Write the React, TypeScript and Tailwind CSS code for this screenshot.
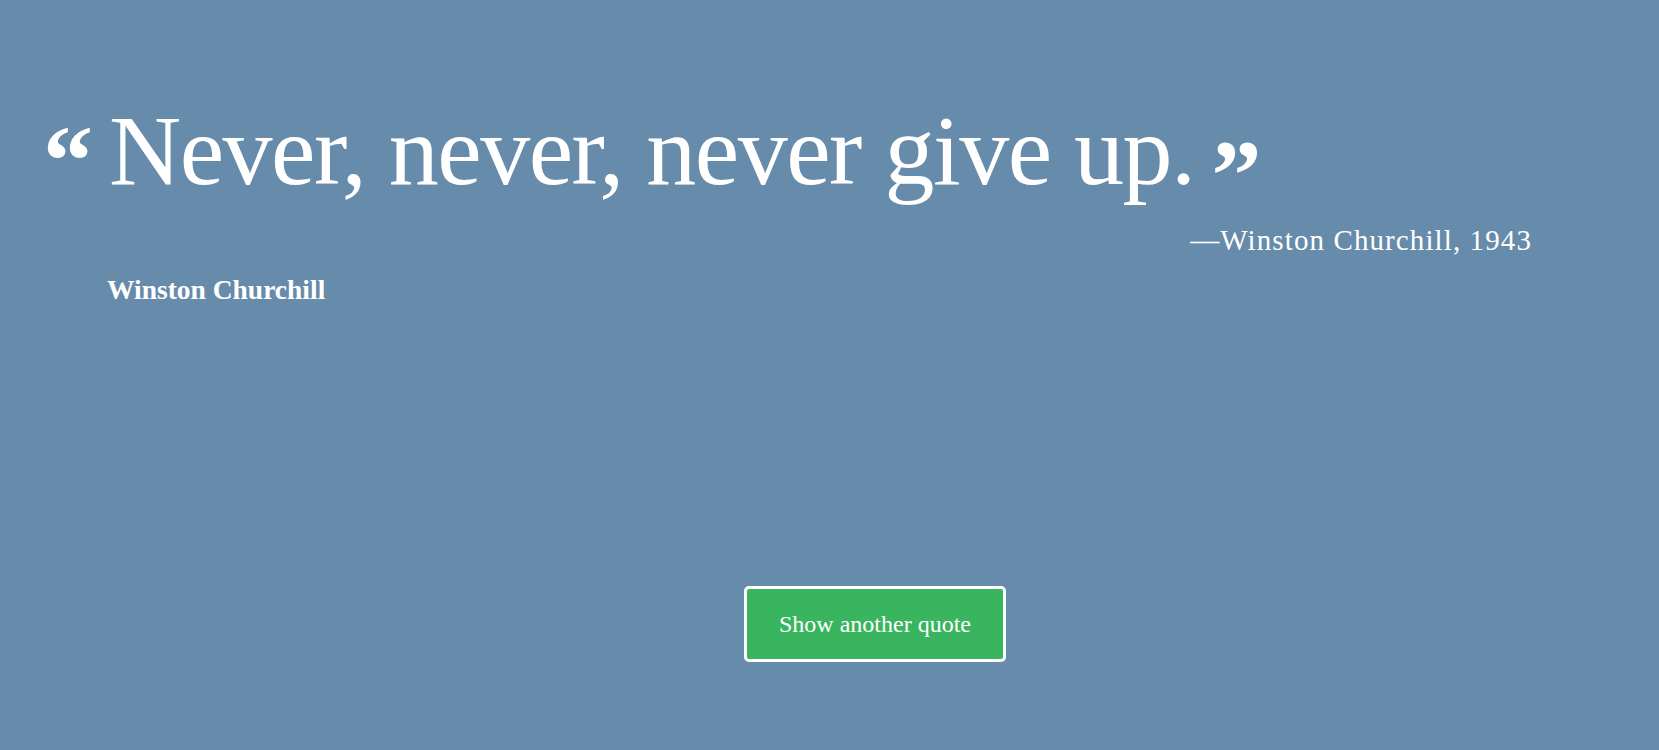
const serif = { fontFamily: '"Liberation Serif", "DejaVu Serif", serif' };

function QuoteMark({ char, className }: { char: string; className: string }) {
  return (
    <span className={`font-bold leading-none text-[100px] select-none ${className}`} style={serif}>
      {char}
    </span>
  );
}

export default function App() {
  return (
    <main className="h-screen w-full bg-[#678baa] text-white overflow-hidden" style={serif}>
      <section className="pt-[101px] pl-[43px]">
        <div className="flex items-start">
          <QuoteMark char="“" className="mt-[10px] w-[66px]" />
          <h1 className="text-[100px] leading-none tracking-[-1.5px] font-normal">
            Never, never, never give up.
          </h1>
          <QuoteMark char="”" className="mt-[24px] ml-[17px]" />
        </div>
        <p className="text-right pr-[127px] mt-[1px] text-[29px] leading-none tracking-[1.1px]">
          —Winston Churchill, 1943
        </p>
        <h2 className="ml-[64px] mt-[21px] text-[27.5px] font-bold leading-none">Winston Churchill</h2>
      </section>

      <div className="mt-[282px] pl-[744px]">
        <button className="w-[262px] h-[76px] rounded-[5px] border-[3px] border-white bg-[#39b55f] text-[24px] text-white">
          Show another quote
        </button>
      </div>
    </main>
  );
}
